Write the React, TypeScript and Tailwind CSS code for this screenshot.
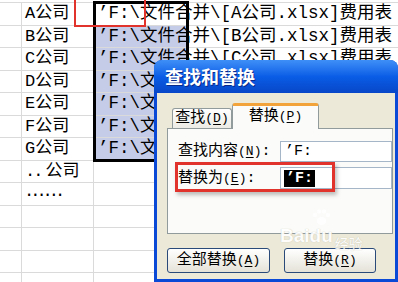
const rows = ['A', 'B', 'C', 'D', 'E', 'F', 'G'];

function Mn({ children }: { children: string }) {
  return (
    <span className="text-[13px]">
      (<u className="underline-offset-2">{children}</u>)
    </span>
  );
}

export default function App() {
  return (
    <div className="relative w-[398px] h-[282px] overflow-hidden bg-white text-black font-['Liberation_Mono','Noto_Sans_CJK_SC',monospace]">
      {/* spreadsheet */}
      <div className="pt-[2px]">
        <div className="border-t border-[#dadada]">
          {rows.map((r, i) => (
            <div key={r} className="flex h-[22.5px] border-b border-[#dadada]">
              <div className="w-[22px] shrink-0 border-r border-[#dadada]" />
              <div className="w-[72px] shrink-0 border-r border-[#dadada] pl-[3px] text-[17px] leading-[21px] whitespace-nowrap">
                {r}公司
              </div>
              <div
                className={
                  i === 0
                    ? 'w-[95px] shrink-0 bg-white pl-[4px] text-[17.5px] leading-[21px] whitespace-nowrap'
                    : 'w-[95px] shrink-0 bg-[#c5cce8] pl-[4px] text-[17.5px] leading-[21px] whitespace-nowrap'
                }
              >
                ’F:\文件合并\[{r}公司.xlsx]费用表
              </div>
              <div className="flex-1" />
            </div>
          ))}
          <div className="flex h-[22.5px] border-b border-[#dadada]">
            <div className="w-[22px] shrink-0 border-r border-[#dadada]" />
            <div className="w-[72px] shrink-0 border-r border-[#dadada] pl-[3px] text-[17px] leading-[21px] whitespace-nowrap">
              <span className="tracking-[-2px]">..</span>
              <span className="pl-[4px]">公司</span>
            </div>
            <div className="flex-1" />
          </div>
          <div className="flex h-[22.5px] border-b border-[#dadada]">
            <div className="w-[22px] shrink-0 border-r border-[#dadada]" />
            <div className="w-[72px] shrink-0 border-r border-[#dadada] pl-[2px] text-[17px] leading-[18px] whitespace-nowrap tracking-[-4px]">
              ......
            </div>
            <div className="flex-1" />
          </div>
          {[0, 1, 2, 3, 4].map((k) => (
            <div key={k} className="flex h-[22.5px] border-b border-[#dadada]">
              <div className="w-[22px] shrink-0 border-r border-[#dadada]" />
              <div className="w-[72px] shrink-0 border-r border-[#dadada]" />
              <div className="flex-1" />
            </div>
          ))}
        </div>
      </div>

      {/* selection border */}
      <div className="absolute left-[93px] top-[1px] w-[96px] h-[161px] border-[3px] border-black" />

      {/* red annotation top */}
      <div className="absolute left-[74px] top-[-2px] w-[72px] h-[29px] border-2 border-[#e2322c]" />

      {/* dialog */}
      <div className="absolute left-[154px] top-[60px] w-[244px] h-[222px] rounded-t-[8px] bg-[#0a48d6] px-[3px] pb-[3px] flex flex-col">
        <div className="-mx-[3px] h-[33px] shrink-0 rounded-t-[8px] bg-gradient-to-b from-[#3f8ff7] via-[#0a5de6] to-[#0846c8] flex items-center pl-[11px] pb-[1px] text-white font-bold text-[18px] font-['Noto_Sans_CJK_SC',sans-serif] [text-shadow:1px_1px_0_#0a2a8a]">
          查找和替换
        </div>
        <div className="flex-1 bg-[#ece9d8] pt-[11px]">
          {/* tabs */}
          <div className="ml-[15px] flex items-end h-[24px]">
            <div className="w-[60px] h-[20px] border border-b-0 border-[#919b9c] rounded-t-[3px] bg-gradient-to-b from-white to-[#ecebe5] flex items-center justify-center text-[15px] leading-none">
              查找<Mn>D</Mn>
            </div>
            <div className="relative z-10 -mb-[1px] w-[87px] h-[26px] border border-b-0 border-[#919b9c] border-t-[3px] border-t-[#f2a33a] rounded-t-[3px] bg-[#fbfbf9] flex items-center justify-center text-[15px] leading-none pb-[2px]">
              替换<Mn>P</Mn>
            </div>
          </div>
          {/* panel */}
          <div className="ml-[10px] mr-[2px] h-[106px] border border-[#919b9c] bg-[#fbfbf9] pt-[12px] pl-[10px]">
            <div className="flex items-center h-[21px]">
              <div className="w-[102px] shrink-0 text-[15px] leading-none whitespace-nowrap">
                查找内容<Mn>N</Mn>:
              </div>
              <div className="flex-1 h-[21px] border border-[#a5b6c9] bg-white flex items-center pl-[4px] text-[15px] leading-none">
                ’F:
              </div>
            </div>
            <div className="mt-[5px] flex items-center h-[22px]">
              <div className="w-[102px] shrink-0 text-[15px] leading-none whitespace-nowrap">
                替换为<Mn>E</Mn>:
              </div>
              <div className="flex-1 h-[22px] border border-[#a5b6c9] bg-white flex items-center pl-[3px]">
                <span className="bg-black text-white text-[15px] leading-[17px] px-[2px] font-bold">’F:</span>
              </div>
            </div>
          </div>
          {/* buttons */}
          <div className="ml-[10px] mt-[14px] flex gap-[14px]">
            <div className="w-[103px] h-[25px] rounded-[3px] border border-[#2a4a7a] bg-gradient-to-b from-white to-[#e4e2d8] flex items-center justify-center text-[15px] leading-none">
              全部替换<Mn>A</Mn>
            </div>
            <div className="w-[92px] h-[25px] rounded-[3px] border border-[#2a4a7a] bg-gradient-to-b from-white to-[#e4e2d8] flex items-center justify-center text-[15px] leading-none">
              替换<Mn>R</Mn>
            </div>
          </div>
        </div>
      </div>

      {/* red annotation replace row */}
      <div className="absolute left-[175px] top-[162px] w-[160px] h-[30px] border-[3px] border-[#e2322c] shadow-[2px_3px_4px_rgba(0,0,0,0.25)]" />

      {/* watermark */}
      <div className="absolute left-[280px] top-[226px] flex items-end text-white opacity-90 font-['Liberation_Sans',sans-serif] [text-shadow:0_0_1px_#b8b6aa]">
        <span className="text-[19px] font-bold leading-none">Bai</span>
        <span className="relative text-[19px] font-bold leading-none">
          du
          <svg className="absolute left-[1px] top-[-17px]" width="20" height="17" viewBox="0 0 20 17">
            <circle cx="4" cy="6" r="2.3" fill="white" />
            <circle cx="8" cy="2.5" r="2.3" fill="white" />
            <circle cx="13" cy="2.5" r="2.3" fill="white" />
            <circle cx="17" cy="6" r="2.3" fill="white" />
            <ellipse cx="10.5" cy="12" rx="5" ry="4" fill="white" />
          </svg>
        </span>
        <span className="ml-[2px] text-[14px] leading-none font-['Noto_Sans_CJK_SC',sans-serif] mb-[-5px]">经验</span>
      </div>
    </div>
  );
}
